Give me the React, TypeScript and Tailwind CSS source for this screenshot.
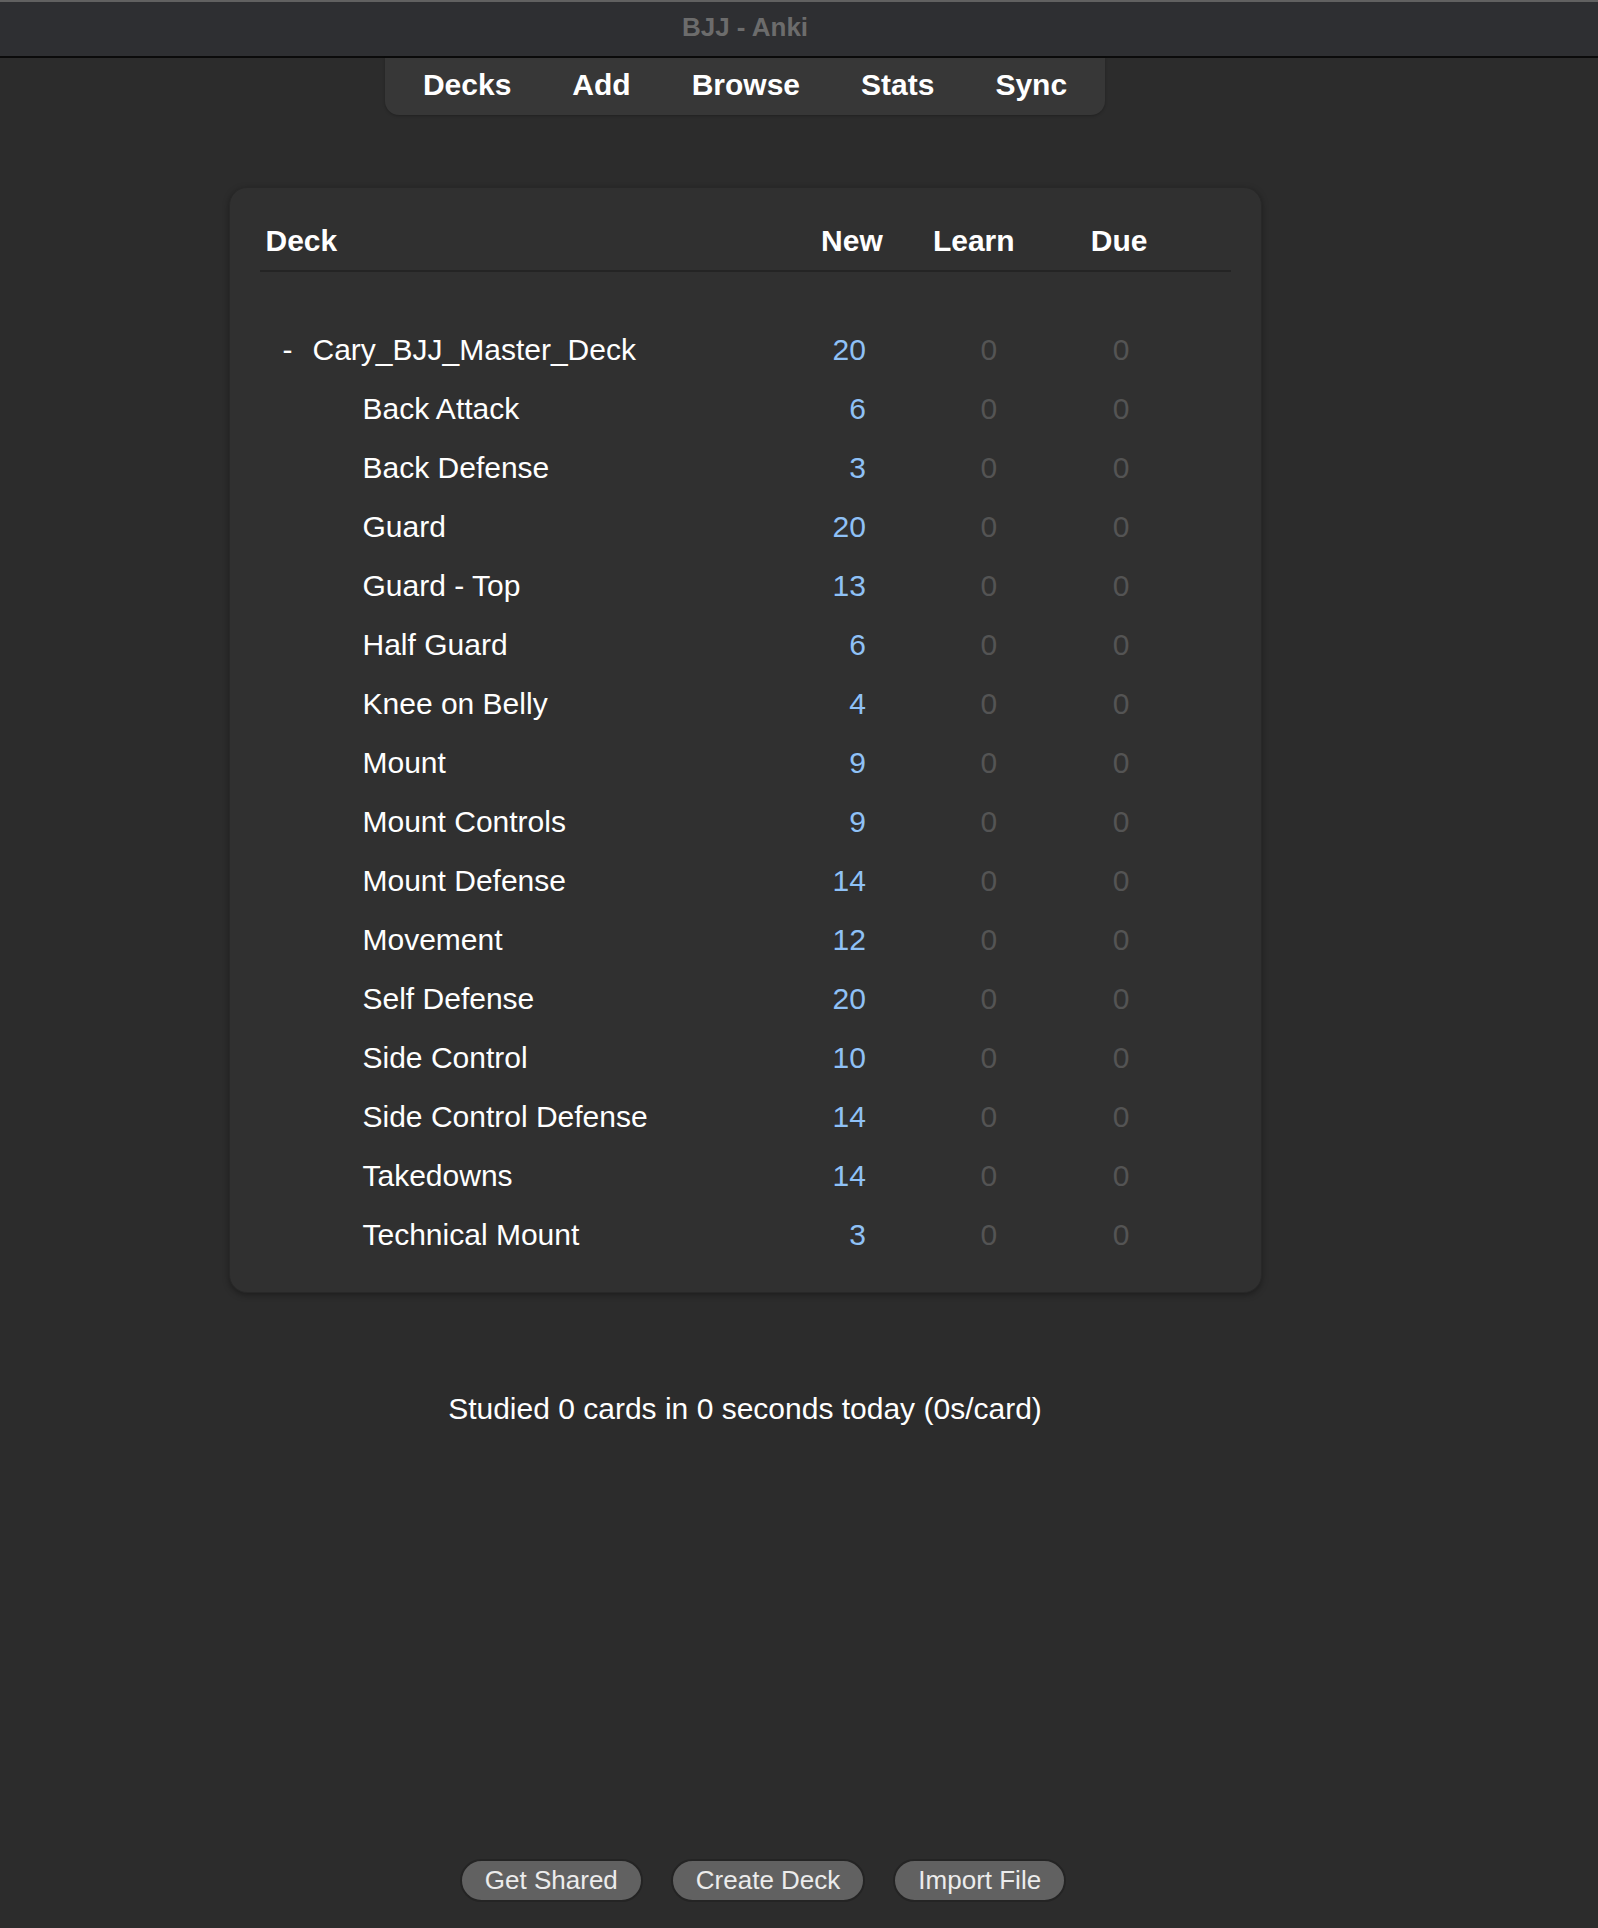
const font = { fontFamily: '"Liberation Sans", Arial, Helvetica, sans-serif' }

type Deck = { name: string; newCount: number; learn: number; due: number; child?: boolean }

const DECKS: Deck[] = [
	{ name: "Cary_BJJ_Master_Deck", newCount: 20, learn: 0, due: 0 },
	{ name: "Back Attack", newCount: 6, learn: 0, due: 0, child: true },
	{ name: "Back Defense", newCount: 3, learn: 0, due: 0, child: true },
	{ name: "Guard", newCount: 20, learn: 0, due: 0, child: true },
	{ name: "Guard - Top", newCount: 13, learn: 0, due: 0, child: true },
	{ name: "Half Guard", newCount: 6, learn: 0, due: 0, child: true },
	{ name: "Knee on Belly", newCount: 4, learn: 0, due: 0, child: true },
	{ name: "Mount", newCount: 9, learn: 0, due: 0, child: true },
	{ name: "Mount Controls", newCount: 9, learn: 0, due: 0, child: true },
	{ name: "Mount Defense", newCount: 14, learn: 0, due: 0, child: true },
	{ name: "Movement", newCount: 12, learn: 0, due: 0, child: true },
	{ name: "Self Defense", newCount: 20, learn: 0, due: 0, child: true },
	{ name: "Side Control", newCount: 10, learn: 0, due: 0, child: true },
	{ name: "Side Control Defense", newCount: 14, learn: 0, due: 0, child: true },
	{ name: "Takedowns", newCount: 14, learn: 0, due: 0, child: true },
	{ name: "Technical Mount", newCount: 3, learn: 0, due: 0, child: true },
]

const NAV = ["Decks", "Add", "Browse", "Stats", "Sync"]

function DeckRow({ deck }: { deck: Deck }) {
	return (
		<div className="flex h-[59px] items-center text-[30px] leading-[59px]">
			<div className="flex w-[551px] text-white">
				{deck.child ? (
					<span className="pl-[103px]">{deck.name}</span>
				) : (
					<>
						<span className="w-[53px] pl-[23px]">-</span>
						<span>{deck.name}</span>
					</>
				)}
			</div>
			<div className="w-[84px] pr-[28px] text-right text-[#8fc1f6]">{deck.newCount}</div>
			<div className="w-[160px] pl-[30px] text-center text-[#545454]">{deck.learn}</div>
			<div className="w-[131px] pl-[4px] text-center text-[#545454]">{deck.due}</div>
			<div className="w-[46px]" />
		</div>
	)
}

export default function App() {
	return (
		<div className="flex h-[1928px] w-[1598px] flex-col bg-[#2c2c2c]" style={font}>
			{/* window title bar */}
			<div className="h-[58px] w-full border-t-2 border-b-2 border-t-[#616161] border-b-[#0b0b0b] bg-[#2e2f32]">
				<div className="w-[1490px] pt-[7px] text-center text-[26px] font-bold leading-[36px] text-[#6c6c6c]">BJJ - Anki</div>
			</div>

			<div className="flex w-[1490px] flex-col items-center">
				{/* top toolbar */}
				<div className="flex gap-[61px] rounded-b-[14px] bg-[#373737] px-[38px] pt-[9px] pb-[12px] text-[30px] font-bold leading-[36px] text-white shadow-[0_1px_3px_rgba(0,0,0,0.25)]">
					{NAV.map((n) => (
						<span key={n}>{n}</span>
					))}
				</div>

				{/* deck list */}
				<div className="mt-[72px] w-[1033px] rounded-[18px] border border-[#282828] bg-[#303030] px-[30px] pt-[35px] pb-[28px] shadow-[0_2px_6px_rgba(0,0,0,0.35)]">
					<div className="flex border-b-2 border-[#242424] pb-[11px] text-[30px] font-bold leading-[36px] text-white">
						<div className="w-[551px] pl-[6px]">Deck</div>
						<div className="w-[84px] text-center">New</div>
						<div className="w-[160px] text-center">Learn</div>
						<div className="w-[131px] text-center">Due</div>
						<div className="w-[46px]" />
					</div>
					<div className="h-[48px]" />
					{DECKS.map((d) => (
						<DeckRow key={d.name} deck={d} />
					))}
				</div>

				<div className="mt-[98px] text-[30px] leading-[36px] text-white">Studied 0 cards in 0 seconds today (0s/card)</div>
			</div>

			<div className="flex-1" />

			{/* bottom buttons */}
			<div className="flex w-[1526px] justify-center gap-[28px] pb-[26px]">
				{["Get Shared", "Create Deck", "Import File"].map((b) => (
					<button
						key={b}
						type="button"
						className="h-[43px] rounded-full border-2 border-[#242424] bg-[#616161] px-[23px] text-[26px] leading-[39px] text-[#ececec]"
					>
						{b}
					</button>
				))}
			</div>
		</div>
	)
}
